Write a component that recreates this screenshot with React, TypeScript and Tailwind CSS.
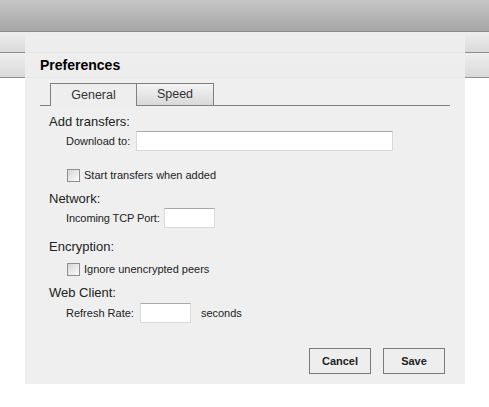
import React from "react";

function Checkbox() {
  return (
    <span className="inline-block w-[13px] h-[13px] border border-[#8e8f8f] bg-gradient-to-br from-[#d6d6d6] to-[#fbfbfb] shrink-0" />
  );
}

function TextInput({ w }: { w: string }) {
  return (
    <span
      className={`inline-block h-[20px] bg-white border border-[#d9d9d9] border-t-[#a9a9a9] ${w}`}
    />
  );
}

export default function App() {
  return (
    <div
      className="relative w-[489px] h-[407px] bg-white overflow-hidden text-[#222]"
      style={{ fontFamily: '"Liberation Sans", Arial, sans-serif' }}
    >
      <div className="h-[32px] bg-gradient-to-b from-[#c6c6c6] to-[#a6a6a6] border-b border-[#8a8a8a]" />
      <div className="h-[21px] bg-gradient-to-b from-[#eeeeee] to-[#dadada] border-b border-[#8f8f8f]" />
      <div className="h-[25px] bg-gradient-to-b from-[#eeeeee] to-[#dadada] border-b border-[#8f8f8f]" />

      <div className="absolute left-[25px] top-[35px] w-[440px] h-[349px] bg-[#eeeeee]/[0.93] px-[15px] flex flex-col">
        <div className="pt-[22px] h-[38px] text-[14px] leading-[16px] font-bold text-black">Preferences</div>
        <div className="mt-[10px] h-[23px] border-b border-[#808080] flex pl-[10px]">
          <div className="w-[87px] h-[23px] border border-b-0 border-[#808080] bg-[#eeeeee] flex items-center justify-center text-[12.5px] text-[#333]">
            General
          </div>
          <div className="w-[77px] h-[22px] border border-l-0 border-b-0 border-[#808080] bg-gradient-to-b from-[#f4f4f4] to-[#d9d9d9] flex items-center justify-center text-[12.5px] text-[#333]">
            Speed
          </div>
        </div>

        <div className="pl-[9px] flex flex-col">
          <div className="mt-[6px] h-[19px] flex items-center text-[13px]">Add transfers:</div>
          <div className="h-[20px] pl-[17px] flex items-center gap-[6px] text-[11px]">
            <span>Download to:</span>
            <TextInput w="w-[257px]" />
          </div>
          <div className="mt-[17px] h-[14px] pl-[18px] flex items-center gap-[4px] text-[11px]">
            <Checkbox />
            <span>Start transfers when added</span>
          </div>

          <div className="mt-[7px] h-[19px] flex items-center text-[13px]">Network:</div>
          <div className="h-[20px] pl-[17px] flex items-center gap-[4px] text-[11px]">
            <span className="tracking-[-0.1px]">Incoming TCP Port:</span>
            <TextInput w="w-[51px]" />
          </div>

          <div className="mt-[9px] h-[20px] flex items-center text-[13px]">Encryption:</div>
          <div className="mt-[5px] h-[14px] pl-[18px] flex items-center gap-[4px] text-[11px]">
            <Checkbox />
            <span>Ignore unencrypted peers</span>
          </div>

          <div className="mt-[7px] h-[20px] flex items-center text-[13px]">Web Client:</div>
          <div className="h-[20px] pl-[17px] flex items-center gap-[6px] text-[11px]">
            <span>Refresh Rate:</span>
            <TextInput w="w-[51px]" />
            <span className="ml-[4px]">seconds</span>
          </div>
        </div>

        <div className="mt-[25px] flex justify-end gap-[12px] pr-[5px]">
          <button className="w-[62px] h-[26px] border border-[#7a7a7a] bg-[#eeeeee] text-[11px] font-bold text-[#222]">
            Cancel
          </button>
          <button className="w-[62px] h-[26px] border border-[#7a7a7a] bg-[#eeeeee] text-[11px] font-bold text-[#222]">
            Save
          </button>
        </div>
      </div>
    </div>
  );
}
